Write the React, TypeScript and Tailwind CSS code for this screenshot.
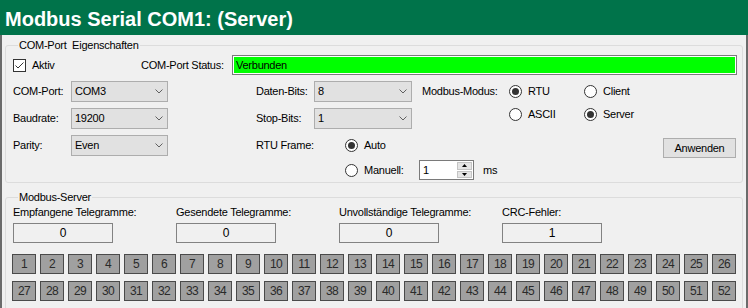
import React from 'react';

const Chevron = () => (
  <svg width="8" height="5" viewBox="0 0 8 5" className="shrink-0">
    <polyline points="0.5,0.5 4,4 7.5,0.5" fill="none" stroke="#606060" strokeWidth="1" />
  </svg>
);

const Combo = ({ value, className }: { value: string; className: string }) => (
  <div className={`flex items-center justify-between h-[21px] shrink-0 bg-[#e1e1e1] border border-[#adadad] pl-[3px] pr-[4px] ${className}`}>
    <span>{value}</span>
    <Chevron />
  </div>
);

const Radio = ({ checked }: { checked?: boolean }) => (
  <span className="flex items-center justify-center w-[13px] h-[13px] shrink-0 rounded-full border border-[#333333] bg-white">
    {checked && <span className="w-[7px] h-[7px] rounded-full bg-[#333333]" />}
  </span>
);

const RadioItem = ({ label, checked, className }: { label: string; checked?: boolean; className?: string }) => (
  <div className={`flex items-center shrink-0 ${className ?? ''}`}>
    <Radio checked={checked} />
    <span className="ml-[6px]">{label}</span>
  </div>
);

const Checkbox = () => (
  <span className="flex items-center justify-center w-[13px] h-[13px] shrink-0 border border-[#333333] bg-white">
    <svg width="11" height="11" viewBox="0 0 11 11">
      <polyline points="1.5,5.5 4,8 9.5,2.5" fill="none" stroke="#333333" strokeWidth="1" />
    </svg>
  </span>
);

const Spinner = () => (
  <div className="flex flex-col w-[15px] my-[1px] mr-[1px] gap-[1px]">
    <div className="flex-1 flex items-center justify-center bg-[#e5e5e5] border border-[#c4c4c4]">
      <svg width="5" height="3" viewBox="0 0 5 3"><polygon points="2.5,0 5,3 0,3" fill="#000" /></svg>
    </div>
    <div className="flex-1 flex items-center justify-center bg-[#e5e5e5] border border-[#c4c4c4]">
      <svg width="5" height="3" viewBox="0 0 5 3"><polygon points="0,0 5,0 2.5,3" fill="#000" /></svg>
    </div>
  </div>
);

const stats = [
  { label: 'Empfangene Telegramme:', value: '0' },
  { label: 'Gesendete Telegramme:', value: '0' },
  { label: 'Unvollständige Telegramme:', value: '0' },
  { label: 'CRC-Fehler:', value: '1' },
];

const cells = Array.from({ length: 52 }, (_, i) => i + 1);

export default function App() {
  return (
    <div className="flex flex-col w-[748px] h-[308px] overflow-hidden bg-[#f0f0f0] text-black text-[11px] tracking-[-0.25px] font-['Liberation_Sans',Arial,sans-serif]">
      <div className="h-[35px] shrink-0 bg-[#00734a] text-white font-bold text-[20px] tracking-normal leading-[32px] pt-[3px] pl-[5px]">
        Modbus Serial COM1: (Server)
      </div>

      <div className="flex-1 flex flex-col border-l-2 border-r-2 border-[#6b6b6b]">
        {/* COM-Port Eigenschaften */}
        <fieldset className="mt-[4px] ml-[3px] mr-[3px] border border-[#dcdcdc] rounded-[3px] pl-[7px] pr-[5px] pb-[2px]">
          <legend className="ml-[5px] px-[1px] leading-[13px] whitespace-pre">COM-Port  Eigenschaften</legend>

          <div className="flex items-center h-[20px] mt-[3px]">
            <div className="flex items-center w-[128px] shrink-0">
              <Checkbox />
              <span className="ml-[6px]">Aktiv</span>
            </div>
            <span className="w-[91px] shrink-0">COM-Port Status:</span>
            <div className="flex-1 h-[20px] border border-[#7a7a7a] bg-white p-[1px]">
              <div className="h-full bg-[#00ff00] pl-[2px] leading-[16px]">Verbunden</div>
            </div>
          </div>

          <div className="flex mt-[6px]">
            <div className="flex flex-col gap-[6px] w-[155px] shrink-0">
              <div className="flex items-center">
                <span className="w-[58px] shrink-0">COM-Port:</span>
                <Combo value="COM3" className="w-[97px]" />
              </div>
              <div className="flex items-center">
                <span className="w-[58px] shrink-0">Baudrate:</span>
                <Combo value="19200" className="w-[97px]" />
              </div>
              <div className="flex items-center">
                <span className="w-[58px] shrink-0">Parity:</span>
                <Combo value="Even" className="w-[97px]" />
              </div>
            </div>

            <div className="flex flex-col w-[156px] shrink-0 ml-[88px] whitespace-nowrap">
              <div className="flex items-center">
                <span className="w-[58px] shrink-0">Daten-Bits:</span>
                <Combo value="8" className="w-[98px]" />
              </div>
              <div className="flex items-center mt-[6px]">
                <span className="w-[58px] shrink-0">Stop-Bits:</span>
                <Combo value="1" className="w-[98px]" />
              </div>
              <div className="flex items-center h-[21px] mt-[6px]">
                <span className="w-[89px] shrink-0">RTU Frame:</span>
                <RadioItem label="Auto" checked />
              </div>
              <div className="flex items-center h-[20px] mt-[4px] pl-[89px]">
                <Radio />
                <span className="ml-[6px] w-[55px] shrink-0">Manuell:</span>
                <div className="flex w-[55px] h-[20px] shrink-0 border border-[#7a7a7a] bg-white">
                  <span className="flex-1 pl-[3px] leading-[18px]">1</span>
                  <Spinner />
                </div>
                <span className="ml-[9px] shrink-0">ms</span>
              </div>
            </div>

            <div className="flex flex-col flex-1 ml-[10px]">
              <div className="flex items-center h-[21px]">
                <span className="w-[87px] shrink-0">Modbus-Modus:</span>
                <RadioItem label="RTU" checked className="w-[75px]" />
                <RadioItem label="Client" />
              </div>
              <div className="flex items-center h-[21px] mt-[2px] pl-[87px]">
                <RadioItem label="ASCII" className="w-[75px]" />
                <RadioItem label="Server" checked />
              </div>
              <button className="self-end mt-[13px] mr-[1px] w-[73px] h-[20px] bg-[#e1e1e1] border border-[#adadad] text-[11px] leading-[18px]">
                Anwenden
              </button>
            </div>
          </div>
        </fieldset>

        {/* Modbus-Server */}
        <fieldset className="mt-[8px] ml-[3px] mr-[3px] border border-[#dcdcdc] rounded-[3px] pl-[7px] pr-[5px] pb-[10px]">
          <legend className="ml-[5px] px-[1px] leading-[13px]">Modbus-Server</legend>

          <div className="flex mt-[2px]">
            {stats.map((s) => (
              <div key={s.label} className="flex flex-col w-[163px] shrink-0">
                <span className="leading-[13px] whitespace-nowrap">{s.label}</span>
                <div className="mt-[4px] w-[100px] h-[20px] border border-[#828282] bg-[#f0f0f0] text-center text-[12px] leading-[18px]">
                  {s.value}
                </div>
              </div>
            ))}
          </div>

          <div className="grid grid-cols-[repeat(26,24px)] gap-x-[4px] gap-y-[7px] mt-[11px] -ml-[1px]">
            {cells.map((n) => (
              <div
                key={n}
                className="h-[20px] border border-[#4a4a4a] bg-[#a0a0a0] text-[#2a2a2a] text-center text-[12px] tracking-[-0.6px] leading-[18px]"
              >
                {n}
              </div>
            ))}
          </div>
        </fieldset>
      </div>
    </div>
  );
}
